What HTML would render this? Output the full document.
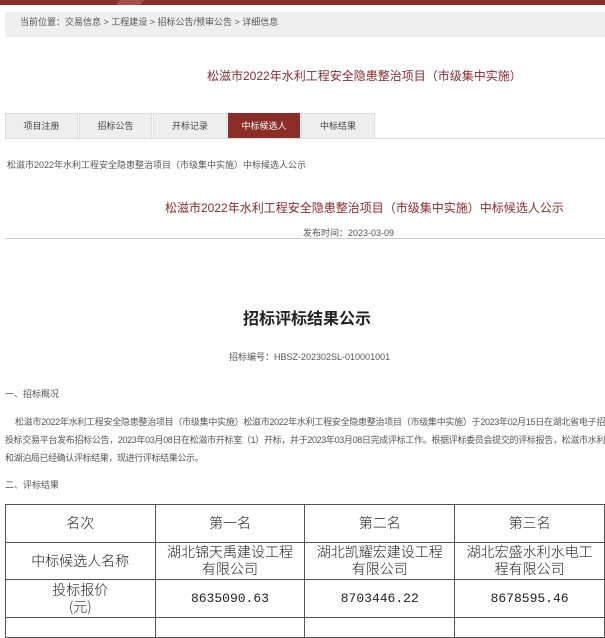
<!DOCTYPE html>
<html><head><meta charset="utf-8"><style>
*{margin:0;padding:0;box-sizing:border-box}
body{width:605px;height:621px;overflow:hidden;background:#fff;font-family:"Liberation Sans","Noto Sans CJK SC",sans-serif;position:relative;color:#333}
.a{position:absolute;white-space:nowrap}
.tab{position:absolute;top:113px;height:26px;background:#eee;border:1px solid #ddd;font-size:9px;color:#444;text-align:center;line-height:24px}
td{border:1px solid #555;text-align:center;font-family:"Noto Sans CJK SC","Liberation Sans",sans-serif;font-weight:300;font-size:14px;color:#222;line-height:17px}
td.n{font-family:"Liberation Mono",monospace;font-size:13px}
</style></head><body>
<div class="a" style="left:0;top:0;width:605px;height:5px;background:#8b2d2b"></div>
<div class="a" style="left:118px;top:0;width:24px;height:5px;background:#a9504c;transform:skewX(-40deg)"></div>
<div class="a" style="left:5px;top:12px;width:600px;height:25px;background:#efefef"></div>
<div class="a" style="left:20px;top:16px;font-size:9px;color:#555;line-height:12px">当前位置：交易信息 &gt; 工程建设 &gt; 招标公告/预审公告 &gt; 详细信息</div>
<div class="a" style="left:207px;top:68px;font-size:12px;color:#8b2b2b;line-height:16px">松滋市2022年水利工程安全隐患整治项目（市级集中实施）</div>
<div class="tab" style="left:5px;width:73px">项目注册</div>
<div class="tab" style="left:79px;width:73px">招标公告</div>
<div class="tab" style="left:153px;width:74px">开标记录</div>
<div class="tab" style="left:228px;width:72px;background:#8b2e2a;border-color:#8b2e2a;color:#fff">中标候选人</div>
<div class="tab" style="left:301px;width:74px">中标结果</div>
<div class="a" style="left:5px;top:138px;width:600px;height:1px;background:#ddd"></div>
<div class="a" style="left:7px;top:159px;font-size:9px;color:#555;line-height:12px">松滋市2022年水利工程安全隐患整治项目（市级集中实施）中标候选人公示</div>
<div class="a" style="left:165px;top:200px;font-size:12px;color:#8b2b2b;line-height:16px">松滋市2022年水利工程安全隐患整治项目（市级集中实施）中标候选人公示</div>
<div class="a" style="left:303px;top:227px;font-size:9px;color:#555;line-height:12px">发布时间：2023-03-09</div>
<div class="a" style="left:5px;top:238px;width:600px;height:1px;background:#ccc"></div>
<div class="a" style="left:243px;top:310px;font-size:16px;font-weight:bold;color:#222;line-height:20px">招标评标结果公示</div>
<div class="a" style="left:229px;top:351px;font-size:9px;color:#555;line-height:12px">招标编号：HBSZ-202302SL-010001001</div>
<div class="a" style="left:5px;top:388px;font-size:9px;color:#555;line-height:12px">一、招标概况</div>
<div class="a" style="left:5px;top:413px;width:600px;white-space:normal;font-size:9px;color:#555;line-height:18px;text-indent:10px;letter-spacing:-0.38px;text-align:justify">松滋市2022年水利工程安全隐患整治项目（市级集中实施）松滋市2022年水利工程安全隐患整治项目（市级集中实施）于2023年02月15日在湖北省电子招投标交易平台发布招标公告，2023年03月08日在松滋市开标室（1）开标，并于2023年03月08日完成评标工作。根据评标委员会提交的评标报告，松滋市水利和湖泊局已经确认评标结果，现进行评标结果公示。</div>
<div class="a" style="left:5px;top:479px;font-size:9px;color:#555;line-height:12px">二、评标结果</div>
<table class="a" style="left:5px;top:504px;width:600px;border-collapse:collapse">
<tr style="height:38px"><td style="width:150px">名次</td><td style="width:150px">第一名</td><td style="width:150px">第二名</td><td style="width:150px">第三名</td></tr>
<tr style="height:37px"><td>中标候选人名称</td><td>湖北锦天禹建设工程<br>有限公司</td><td>湖北凯耀宏建设工程<br>有限公司</td><td>湖北宏盛水利水电工<br>程有限公司</td></tr>
<tr style="height:38px"><td>投标报价<br>(元)</td><td class="n">8635090.63</td><td class="n">8703446.22</td><td class="n">8678595.46</td></tr>
<tr style="height:20px"><td></td><td></td><td></td><td></td></tr>
</table>
</body></html>
